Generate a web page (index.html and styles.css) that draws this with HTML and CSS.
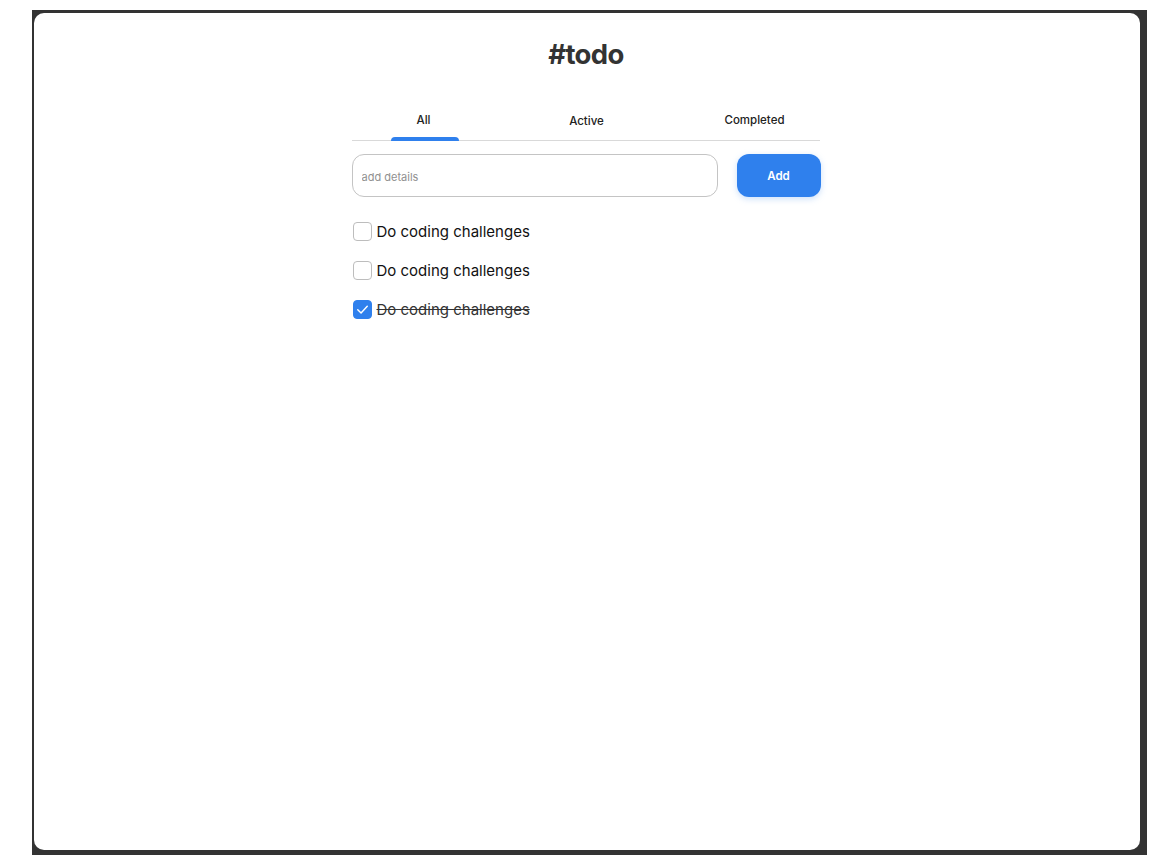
FILE: index.html
```html
<!DOCTYPE html>
<html lang="en">
<head>
<meta charset="utf-8">
<title>#todo</title>
<link rel="stylesheet" href="styles.css">
</head>
<body>
<div class="frame">
  <div class="screen">
    <main class="app">
      <h1 class="title">#todo</h1>
      <nav class="tabs">
        <div class="tab tab-all active"><span>All</span></div>
        <div class="tab tab-active"><span>Active</span></div>
        <div class="tab tab-completed"><span>Completed</span></div>
      </nav>
      <form class="add-row">
        <input class="add-input" type="text" placeholder="add details">
        <button class="add-btn" type="button">Add</button>
      </form>
      <ul class="todos">
        <li class="todo">
          <span class="box"></span>
          <span class="label">Do coding challenges</span>
        </li>
        <li class="todo">
          <span class="box"></span>
          <span class="label">Do coding challenges</span>
        </li>
        <li class="todo done">
          <span class="box checked">
            <svg viewBox="0 0 20 20" width="20" height="20"><path d="M4.4 10.2 L8.3 14 L15.6 6.2" fill="none" stroke="#fff" stroke-width="1.7" stroke-linecap="round" stroke-linejoin="round"/></svg>
          </span>
          <span class="label">Do coding challenges</span>
        </li>
      </ul>
    </main>
  </div>
</div>
</body>
</html>
```
FILE: styles.css
```css
* { box-sizing: border-box; }
html, body { margin: 0; padding: 0; background: #fff; }
body { font-family: "Inter", "Noto Sans", sans-serif; color: #333; }

.frame {
  margin: 10px 0 0 32px;
  width: 1115px;
  height: 845px;
  background: #333;
  padding: 3px 7px 5px 2px;
}
.screen {
  width: 100%;
  height: 100%;
  background: #fff;
  border-radius: 10px;
}
.app {
  width: 469px;
  margin: 0 auto;
  padding-top: 23px;
  position: relative;
  left: -1px;
}
.title {
  margin: 0;
  text-align: center;
  font-size: 27.5px;
  line-height: 36px;
  font-weight: 700;
  letter-spacing: -0.6px;
  color: #333;
}
.tabs {
  margin-top: 36px;
  width: 468px;
  display: grid;
  grid-template-columns: 144px 182px 142px;
  border-bottom: 1px solid #d9d9d9;
  height: 33px;
}
.tab {
  font-size: 11.5px;
  font-weight: 500;
  color: #222;
  display: flex;
  justify-content: center;
  padding-top: 5px;
  position: relative;
}
.tab-active { padding-top: 6px; }
.tab-completed { justify-content: flex-end; padding-right: 35px; }
.tab.active::after {
  content: "";
  position: absolute;
  left: 39px;
  bottom: -1px;
  width: 68px;
  height: 4px;
  background: #2f80ed;
  border-radius: 4px 4px 0 0;
}
.add-row {
  margin: 13px 0 0;
  display: flex;
  gap: 19px;
}
.add-input {
  width: 366px;
  height: 43px;
  border: 1px solid #c4c4c4;
  border-radius: 12px;
  padding: 2px 9px 0;
  font-family: inherit;
  font-size: 11px;
  color: #333;
  outline: none;
}
.add-input::placeholder { color: #909090; }
.add-btn {
  width: 84px;
  height: 43px;
  border: none;
  border-radius: 12px;
  padding-top: 2px;
  background: #2f80ed;
  color: #fff;
  font-family: inherit;
  font-size: 11.5px;
  font-weight: 600;
  box-shadow: 0 2px 6px rgba(127, 177, 243, 0.4);
}
.todos {
  list-style: none;
  margin: 25px 0 0;
  padding: 0 0 0 1px;
  display: flex;
  flex-direction: column;
  gap: 20px;
}
.todo {
  display: flex;
  align-items: center;
  gap: 5px;
  height: 19px;
}
.box {
  width: 19px;
  height: 19px;
  border: 1px solid #bdbdbd;
  border-radius: 4px;
  flex: none;
  display: flex;
  align-items: center;
  justify-content: center;
}
.box.checked {
  background: #2f80ed;
  border-color: #2f80ed;
}
.box svg { width: 19px; height: 19px; }
.label {
  font-size: 15px;
  font-weight: 400;
  color: #111;
}
.done .label {
  text-decoration: line-through;
  color: #333;
}
```
